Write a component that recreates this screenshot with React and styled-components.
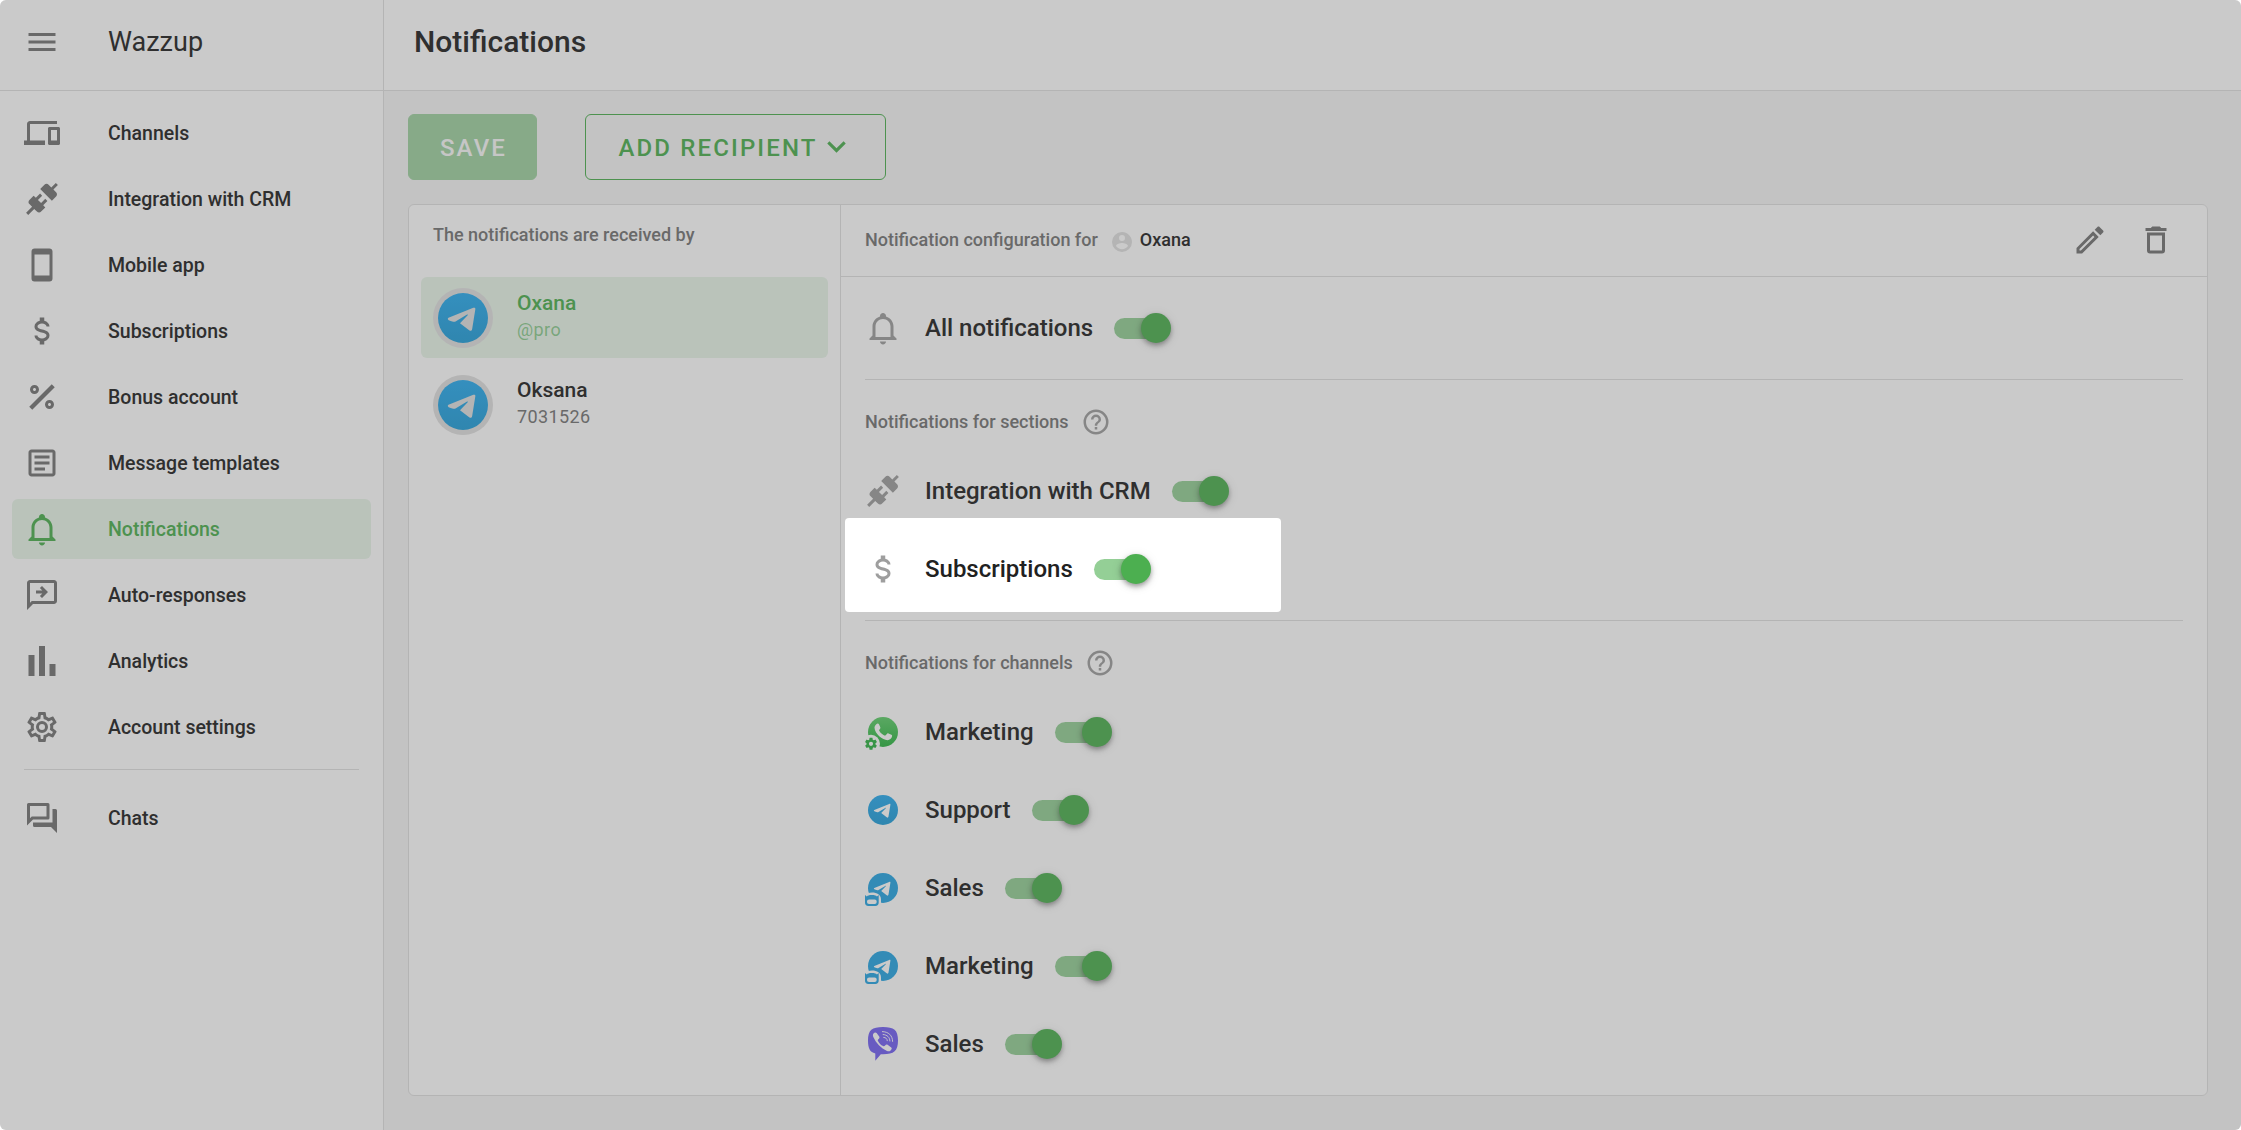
import React from "react";
import styled, { createGlobalStyle, css } from "styled-components";

const GlobalStyle = createGlobalStyle`
  * {
    box-sizing: border-box;
  }
  body {
    margin: 0;
    background: #fff;
    color: #212121;
    font-family: Roboto, "Noto Sans", sans-serif;
  }
  button {
    font-family: inherit;
  }
`;

const paths = {
  menu: "M3,6H21V8H3V6M3,11H21V13H3V11M3,16H21V18H3V16Z",
  devices:
    "M4 6h18V4H4c-1.1 0-2 .9-2 2v11H0v3h14v-3H4V6zm19 2h-6c-.55 0-1 .45-1 1v10c0 .55.45 1 1 1h6c.55 0 1-.45 1-1V9c0-.55-.45-1-1-1zm-1 9h-4v-7h4v7z",
  connection:
    "M21.4 7.5C22.2 8.3 22.2 9.6 21.4 10.3L18.6 13.1L10.8 5.3L13.6 2.5C14.4 1.7 15.7 1.7 16.4 2.5L18.2 4.3L21.2 1.3L22.6 2.7L19.6 5.7L21.4 7.5M15.6 13.3L14.2 11.9L11.4 14.7L9.3 12.6L12.1 9.8L10.7 8.4L7.9 11.2L6.4 9.8L3.6 12.6C2.8 13.4 2.8 14.7 3.6 15.4L5.4 17.2L1.4 21.2L2.8 22.6L6.8 18.6L8.6 20.4C9.4 21.2 10.7 21.2 11.4 20.4L14.2 17.6L12.8 16.2L15.6 13.3Z",
  phone:
    "M17,19H7V5H17M17,1H7C5.89,1 5,1.89 5,3V21A2,2 0 0,0 7,23H17A2,2 0 0,0 19,21V3C19,1.89 18.1,1 17,1Z",
  dollar:
    "M7,15H9C9,16.08 10.37,17 12,17C13.63,17 15,16.08 15,15C15,13.9 13.96,13.5 11.76,12.97C9.64,12.44 7,11.78 7,9C7,7.21 8.47,5.69 10.5,5.18V3H13.5V5.18C15.53,5.69 17,7.21 17,9H15C15,7.92 13.63,7 12,7C10.37,7 9,7.92 9,9C9,10.1 10.04,10.5 12.24,11.03C14.36,11.56 17,12.22 17,15C17,16.79 15.53,18.31 13.5,18.82V21H10.5V18.82C8.47,18.31 7,16.79 7,15Z",
  percent:
    "M18.5 3.5L20.5 5.5L5.5 20.5L3.5 18.5L18.5 3.5M7 4C8.66 4 10 5.34 10 7C10 8.66 8.66 10 7 10C5.34 10 4 8.66 4 7C4 5.34 5.34 4 7 4M17 14C18.66 14 20 15.34 20 17C20 18.66 18.66 20 17 20C15.34 20 14 18.66 14 17C14 15.34 15.34 14 17 14M7 6C6.45 6 6 6.45 6 7C6 7.55 6.45 8 7 8C7.55 8 8 7.55 8 7C8 6.45 7.55 6 7 6M17 16C16.45 16 16 16.45 16 17C16 17.55 16.45 18 17 18C17.55 18 18 17.55 18 17C18 16.45 17.55 16 17 16Z",
  article:
    "M19 5v14H5V5h14m0-2H5c-1.1 0-2 .9-2 2v14c0 1.1.9 2 2 2h14c1.1 0 2-.9 2-2V5c0-1.1-.9-2-2-2zM14 17H7v-2h7v2zm3-4H7v-2h10v2zm0-4H7V7h10v2z",
  bell:
    "M10 21H14C14 22.1 13.1 23 12 23S10 22.1 10 21M21 19V20H3V19L5 17V11C5 7.9 7 5.2 10 4.3V4C10 2.9 10.9 2 12 2S14 2.9 14 4V4.3C17 5.2 19 7.9 19 11V17L21 19M17 11C17 8.2 14.8 6 12 6S7 8.2 7 11V18H17V11Z",
  reply:
    "M20 2H4C2.9 2 2 2.9 2 4V22L6 18H20C21.1 18 22 17.1 22 16V4C22 2.9 21.1 2 20 2M20 16H5.2L4 17.2V4H20V16M12 6L16 10L12 14L10.6 12.6L12.2 11H8V9H12.2L10.6 7.4L12 6Z",
  bars: "M3,22V8H7V22H3M10,22V2H14V22H10M17,22V14H21V22H17Z",
  cog:
    "M12,8A4,4 0 0,1 16,12A4,4 0 0,1 12,16A4,4 0 0,1 8,12A4,4 0 0,1 12,8M12,10A2,2 0 0,0 10,12A2,2 0 0,0 12,14A2,2 0 0,0 14,12A2,2 0 0,0 12,10M10,22C9.75,22 9.54,21.82 9.5,21.58L9.13,18.93C8.5,18.68 7.96,18.34 7.44,17.94L4.95,18.95C4.73,19.03 4.46,18.95 4.34,18.73L2.34,15.27C2.21,15.05 2.27,14.78 2.46,14.63L4.57,12.97L4.5,12L4.57,11L2.46,9.37C2.27,9.22 2.21,8.95 2.34,8.73L4.34,5.27C4.46,5.05 4.73,4.96 4.95,5.05L7.44,6.05C7.96,5.66 8.5,5.32 9.13,5.07L9.5,2.42C9.54,2.18 9.75,2 10,2H14C14.25,2 14.46,2.18 14.5,2.42L14.87,5.07C15.5,5.32 16.04,5.66 16.56,6.05L19.05,5.05C19.27,4.96 19.54,5.05 19.66,5.27L21.66,8.73C21.79,8.95 21.73,9.22 21.54,9.37L19.43,11L19.5,12L19.43,13L21.54,14.63C21.73,14.78 21.79,15.05 21.66,15.27L19.66,18.73C19.54,18.95 19.27,19.04 19.05,18.95L16.56,17.95C16.04,18.34 15.5,18.68 14.87,18.93L14.5,21.58C14.46,21.82 14.25,22 14,22H10M11.25,4L10.88,6.61C9.68,6.86 8.62,7.5 7.85,8.39L5.44,7.35L4.69,8.65L6.8,10.2C6.4,11.37 6.4,12.64 6.8,13.8L4.68,15.36L5.43,16.66L7.86,15.62C8.63,16.5 9.68,17.14 10.87,17.38L11.24,20H12.76L13.13,17.39C14.32,17.14 15.37,16.5 16.14,15.62L18.57,16.66L19.32,15.36L17.2,13.81C17.6,12.64 17.6,11.37 17.2,10.2L19.31,8.65L18.56,7.35L16.15,8.39C15.38,7.5 14.32,6.86 13.12,6.62L12.75,4H11.25Z",
  chats:
    "M15,4V11H5.17L4,12.17V4H15M16,2H3A1,1 0 0,0 2,3V17L6,13H16A1,1 0 0,0 17,12V3A1,1 0 0,0 16,2M21,6H19V15H6V17A1,1 0 0,0 7,18H18L22,22V7A1,1 0 0,0 21,6Z",
  chevron: "M7.41,8.58L12,13.17L16.59,8.58L18,10L12,16L6,10L7.41,8.58Z",
  account:
    "M12,19.2C9.5,19.2 7.29,17.92 6,16C6.03,14 10,12.9 12,12.9C14,12.9 17.97,14 18,16C16.71,17.92 14.5,19.2 12,19.2M12,5A3,3 0 0,1 15,8A3,3 0 0,1 12,11A3,3 0 0,1 9,8A3,3 0 0,1 12,5M12,2A10,10 0 0,0 2,12A10,10 0 0,0 12,22A10,10 0 0,0 22,12C22,6.47 17.5,2 12,2Z",
  pencil:
    "M14.06,9L15,9.94L5.92,19H5V18.08L14.06,9M17.66,3C17.41,3 17.15,3.1 16.96,3.29L15.13,5.12L18.88,8.87L20.71,7.04C21.1,6.65 21.1,6 20.71,5.63L18.37,3.29C18.17,3.09 17.92,3 17.66,3M14.06,6.19L3,17.25V21H6.75L17.81,9.94L14.06,6.19Z",
  trash:
    "M6,19A2,2 0 0,0 8,21H16A2,2 0 0,0 18,19V7H6V19M8,9H16V19H8V9M15.5,4L14.5,3H9.5L8.5,4H5V6H19V4H15.5Z",
  help:
    "M11,18H13V16H11V18M12,2A10,10 0 0,0 2,12A10,10 0 0,0 12,22A10,10 0 0,0 22,12A10,10 0 0,0 12,2M12,20C7.59,20 4,16.41 4,12C4,7.59 7.59,4 12,4C16.41,4 20,7.59 20,12C20,16.41 16.41,20 12,20M12,6A4,4 0 0,0 8,10H10A2,2 0 0,1 12,8A2,2 0 0,1 14,10C14,12 11,11.75 11,15H13C13,12.75 16,12.5 16,10A4,4 0 0,0 12,6Z",
  gear:
    "M12,15.5A3.5,3.5 0 0,1 8.5,12A3.5,3.5 0 0,1 12,8.5A3.5,3.5 0 0,1 15.5,12A3.5,3.5 0 0,1 12,15.5M19.43,12.97C19.47,12.65 19.5,12.33 19.5,12C19.5,11.67 19.47,11.34 19.43,11L21.54,9.37C21.73,9.22 21.78,8.95 21.66,8.73L19.66,5.27C19.54,5.05 19.27,4.96 19.05,5.05L16.56,6.05C16.04,5.66 15.5,5.32 14.87,5.07L14.5,2.42C14.46,2.18 14.25,2 14,2H10C9.75,2 9.54,2.18 9.5,2.42L9.13,5.07C8.5,5.32 7.96,5.66 7.44,6.05L4.95,5.05C4.73,4.96 4.46,5.05 4.34,5.27L2.34,8.73C2.21,8.95 2.27,9.22 2.46,9.37L4.57,11C4.53,11.34 4.5,11.67 4.5,12C4.5,12.33 4.53,12.65 4.57,12.97L2.46,14.63C2.27,14.78 2.21,15.05 2.34,15.27L4.34,18.73C4.46,18.95 4.73,19.03 4.95,18.95L7.44,17.94C7.96,18.34 8.5,18.68 9.13,18.93L9.5,21.58C9.54,21.82 9.75,22 10,22H14C14.25,22 14.46,21.82 14.5,21.58L14.87,18.93C15.5,18.67 16.04,18.34 16.56,17.94L19.05,18.95C19.27,19.03 19.54,18.95 19.66,18.73L21.66,15.27C21.78,15.05 21.73,14.78 21.54,14.63L19.43,12.97Z",
  plane:
    "M6.3 14.9L21.2 8.9C22 8.6 22.6 8.9 22.4 9.8L20.5 21.6C20.3 22.8 19.6 22.9 18.7 22.3L13.2 18.1L17.8 13.3C18.1 12.9 17.7 12.7 17.2 13L10.5 17.1C9.8 17.5 9.1 17.3 6.4 16.3C5.8 16 5.7 15.2 6.3 14.9Z"
};

const Shell = styled.div`
  display: flex;
  height: 100vh;
  overflow: hidden;
  border-radius: 6px;
  background: #f5f5f5;
`;

const Sidebar = styled.aside`
  width: 384px;
  flex: none;
  background: #fff;
  border-right: 1px solid #e0e0e0;
`;

const Brand = styled.div`
  height: 91px;
  display: flex;
  align-items: center;
  gap: 48px;
  padding: 0 24px 7px;
  border-bottom: 1px solid #e0e0e0;
  font-size: 27px;
  svg {
    color: #757575;
  }
`;

const Nav = styled.nav`
  display: flex;
  flex-direction: column;
  gap: 6px;
  padding: 12px 12px 0;
`;

const NavItem = styled.a`
  height: 60px;
  display: flex;
  align-items: center;
  gap: 48px;
  padding: 0 12px;
  border-radius: 6px;
  font-size: 19.5px;
  font-weight: 500;
  svg {
    color: #757575;
  }
  ${({ $active }) =>
    $active &&
    css`
      background: #e8f5e9;
      color: #4caf50;
      svg {
        color: #4caf50;
      }
    `}
`;

const NavDivider = styled.hr`
  width: 335px;
  height: 1px;
  margin: 6px 12px 12px;
  border: 0;
  background: #e0e0e0;
`;

const Main = styled.main`
  flex: 1;
  display: flex;
  flex-direction: column;
`;

const PageHeader = styled.header`
  height: 91px;
  display: flex;
  align-items: center;
  padding: 0 30px 7px;
  background: #fff;
  border-bottom: 1px solid #e0e0e0;
  h1 {
    margin: 0;
    font-size: 30px;
    font-weight: 500;
  }
`;

const Toolbar = styled.div`
  display: flex;
  gap: 48px;
  padding: 23px 24px 24px;
`;

const Button = styled.button`
  height: 66px;
  width: ${({ $width }) => $width}px;
  display: flex;
  align-items: center;
  justify-content: center;
  padding: 2px 0 0 2px;
  border: 1px solid #4caf50;
  border-radius: 6px;
  background: ${({ $filled }) => ($filled ? "#4caf50" : "transparent")};
  color: ${({ $filled }) => ($filled ? "#fff" : "#4caf50")};
  opacity: ${({ disabled }) => (disabled ? 0.5 : 1)};
  font-size: 24px;
  font-weight: 500;
  letter-spacing: 2.14px;
  text-transform: uppercase;
  svg {
    margin-top: -3px;
  }
`;

const Card = styled.section`
  width: 1800px;
  height: 892px;
  display: flex;
  margin-left: 24px;
  background: #fff;
  border: 1px solid #e0e0e0;
  border-radius: 6px;
`;

const Recipients = styled.div`
  width: 432px;
  flex: none;
  display: flex;
  flex-direction: column;
  gap: 6px;
  padding: 0 12px;
  border-right: 1px solid #e0e0e0;
`;

const Caption = styled.div`
  font-size: 18px;
  font-weight: 500;
  color: #757575;
`;

const RecipientsCaption = styled(Caption)`
  height: 66px;
  padding: 19px 12px 0;
`;

const Recipient = styled.div`
  height: 81px;
  display: flex;
  align-items: center;
  gap: 24px;
  padding: 0 12px;
  border-radius: 6px;
  background: ${({ $active }) => ($active ? "#e8f5e9" : "transparent")};
  color: ${({ $active }) => ($active ? "#4caf50" : "#212121")};
  span {
    display: block;
    margin-top: -1px;
    color: ${({ $active }) => ($active ? "rgba(76, 175, 80, 0.6)" : "#757575")};
    font-size: 18px;
    line-height: 27px;
    letter-spacing: 0.4px;
  }
`;

const RecipientName = styled.div`
  margin-top: -3px;
  font-size: 21px;
  font-weight: 500;
  line-height: 27px;
`;

const Avatar = styled.div`
  width: 60px;
  height: 60px;
  padding: 5px;
  border-radius: 50%;
  background: #e0e0e0;
  svg {
    display: block;
  }
`;

const Config = styled.div`
  flex: 1;
`;

const ConfigHeader = styled.div`
  height: 72px;
  display: flex;
  align-items: center;
  padding: 0 33px 2px 24px;
  border-bottom: 1px solid #e0e0e0;
`;

const Person = styled.div`
  flex: 1;
  display: flex;
  align-items: center;
  gap: 6px;
  margin-left: 12px;
  font-size: 18px;
  font-weight: 500;
  svg {
    color: #e0e0e0;
    margin: 2px 0 -2px;
  }
`;

const Actions = styled.div`
  display: flex;
  gap: 30px;
  margin-top: 1px;
  color: #757575;
`;

const Group = styled.div`
  margin: 0 24px;
  padding: ${({ $titled }) => ($titled ? 0 : "12px")} 0 12px;
  & + & {
    border-top: 1px solid #e0e0e0;
  }
`;

const GroupTitle = styled(Caption)`
  height: 72px;
  display: flex;
  align-items: center;
  gap: 12px;
  padding-top: 11px;
  svg {
    color: #9e9e9e;
  }
`;

const Setting = styled.div`
  position: relative;
  height: 78px;
  display: flex;
  align-items: center;
  font-size: 24px;
  font-weight: 500;
  svg {
    flex: none;
    margin-right: 24px;
    color: #9e9e9e;
  }
`;

// Everything outside of the hint is dimmed by its spread shadow
const Spotlight = styled.div`
  position: absolute;
  z-index: 10;
  left: -20px;
  top: -12px;
  width: 436px;
  height: 94px;
  border-radius: 4px;
  box-shadow: 0 0 0 3000px rgba(78, 78, 78, 0.3);
  pointer-events: none;
`;

const Track = styled.div`
  width: 51px;
  height: 21px;
  display: flex;
  align-items: center;
  justify-content: flex-end;
  margin: 1px 0 0 21px;
  border-radius: 11px;
  background: rgba(76, 175, 80, 0.6);
`;

const Thumb = styled.div`
  width: 30px;
  height: 30px;
  flex: none;
  margin: -1px -6px 0 0;
  border-radius: 50%;
  background: #4caf50;
  box-shadow: 0 3px 6px -1px rgba(0, 0, 0, 0.3), 0 2px 4px rgba(0, 0, 0, 0.14),
    0 2px 12px rgba(0, 0, 0, 0.1);
`;

const Icon = ({ name, size = 36 }) => (
  <svg width={size} height={size} viewBox="0 0 24 24" fill="currentColor">
    <path d={paths[name]} />
  </svg>
);

const TelegramFill = ({ id }) => (
  <linearGradient id={id} x1="0" y1="0" x2="0" y2="1">
    <stop offset="0" stopColor="#2aabee" />
    <stop offset="1" stopColor="#229ed9" />
  </linearGradient>
);

const TelegramAvatar = ({ id }) => (
  <svg width="50" height="50" viewBox="0 0 30 30">
    <TelegramFill id={id} />
    <circle cx="15" cy="15" r="15" fill={`url(#${id})`} />
    <path d={paths.plane} fill="#e0e0e0" />
  </svg>
);

const Telegram = () => (
  <svg width="36" height="36" viewBox="0 0 36 36">
    <TelegramFill id="tg" />
    <circle cx="18" cy="18" r="15" fill="url(#tg)" />
    <path d={paths.plane} fill="#fff" transform="translate(3 3)" />
  </svg>
);

const TelegramBot = () => (
  <svg width="36" height="36" viewBox="0 0 36 36">
    <circle cx="18" cy="18" r="15" fill="#27a5e3" />
    <path d={paths.plane} fill="#fff" transform="translate(3 3)" />
    <path d="M0 36V25.5C1 23.5 4 22.6 7 22.6C12 22.6 16 25 16 29.5V36Z" fill="#fff" />
    <path
      d="M0 24.9L1.8 26.6C2.6 25.6 4 25.1 6.8 25.1S11.1 25.6 11.9 26.6L13.7 24.9V32.6A3.4 3.4 0 0 1 10.3 36H3.4A3.4 3.4 0 0 1 0 32.6Z"
      fill="#27a5e3"
    />
    <rect x="2" y="29.4" width="9.7" height="4.6" rx="2.1" fill="#fff" />
  </svg>
);

const WhatsApp = () => (
  <svg width="36" height="36" viewBox="0 0 36 36">
    <linearGradient id="wa" x1="0" y1="0" x2="0" y2="1">
      <stop offset="0" stopColor="#60cf6b" />
      <stop offset="1" stopColor="#2bb541" />
    </linearGradient>
    <circle cx="18" cy="18" r="15" fill="url(#wa)" />
    <path
      d="M11.3 10.3C12.2 9.3 13.6 9.4 14.1 10.5L15.3 13.3C15.6 14 15.3 14.6 14.7 15.3C14 16 14 16.3 14.4 17C15.6 19 17.2 20.5 19.3 21.4C20 21.7 20.4 21.6 20.9 21L22.1 19.7C22.5 19.2 22.9 19.1 23.5 19.4L26.4 20.8C27.2 21.2 27.2 21.7 27 22.6C26.5 24.7 24.7 26.2 22.5 26.2C17.5 26 9.8 20 9.5 13.8C9.5 12.3 10.4 11.2 11.3 10.3Z"
      fill="#fff"
    />
    <circle cx="6" cy="29.8" r="9" fill="#fff" />
    <path
      d={paths.gear}
      fill="#2fb344"
      transform="translate(-1.2 22.6) scale(0.6)"
    />
  </svg>
);

const Viber = () => (
  <svg width="36" height="36" viewBox="0 0 36 36">
    <path
      d="M18 1C29 1 33 4 33 14.5C33 25 29 28.2 18 28.2H15.8L10.3 34.8V27.4C5 26.2 3 22.5 3 14.5C3 4 7 1 18 1Z"
      fill="#7360f2"
    />
    <path
      d="M8.3 7.7C9.4 6.3 10.7 6 11.6 7L14.2 10.4C14.8 11.3 14.5 12.2 13.6 12.9C12.8 13.5 12.6 14 13 14.9C14.1 17.2 15.8 18.9 18.1 20C19 20.4 19.5 20.2 20.1 19.4C20.8 18.5 21.7 18.2 22.6 18.8L26.2 21.5C27.1 22.2 26.9 23.3 25.6 24.5C24.5 25.5 23.4 25.6 22 24.9C15.8 21.9 11.2 17.3 8.3 10.9C7.8 9.6 7.8 8.5 8.3 7.7Z"
      fill="#fff"
    />
    <g fill="none" stroke="#fff" strokeWidth="0.9" strokeLinecap="round">
      <path d="M17.4 5.6C23.5 5.7 27.6 9.5 27.6 15.4" />
      <path d="M18.1 8.5C22.3 8.8 24.8 11.3 24.9 15" />
      <path d="M18.7 11.4C21 11.6 22.2 12.7 22.3 14.7" />
    </g>
  </svg>
);

const navItems = [
  ["devices", "Channels"],
  ["connection", "Integration with CRM"],
  ["phone", "Mobile app"],
  ["dollar", "Subscriptions"],
  ["percent", "Bonus account"],
  ["article", "Message templates"],
  ["bell", "Notifications"],
  ["reply", "Auto-responses"],
  ["bars", "Analytics"],
  ["cog", "Account settings"]
];

const recipients = [
  { name: "Oxana", contact: "@pro" },
  { name: "Oksana", contact: "7031526" }
];

const channels = [
  { name: "Marketing", Logo: WhatsApp },
  { name: "Support", Logo: Telegram },
  { name: "Sales", Logo: TelegramBot },
  { name: "Marketing", Logo: TelegramBot },
  { name: "Sales", Logo: Viber }
];

const SettingRow = ({ icon, label, spotlight }) => (
  <Setting>
    {icon}
    {label}
    <Track>
      <Thumb />
    </Track>
    {spotlight && <Spotlight />}
  </Setting>
);

const App = () => {
  const current = recipients[0];
  return (
    <Shell>
      <GlobalStyle />
      <Sidebar>
        <Brand>
          <Icon name="menu" />
          Wazzup
        </Brand>
        <Nav>
          {navItems.map(([icon, label]) => (
            <NavItem key={label} $active={label === "Notifications"}>
              <Icon name={icon} />
              {label}
            </NavItem>
          ))}
          <NavDivider />
          <NavItem>
            <Icon name="chats" />
            Chats
          </NavItem>
        </Nav>
      </Sidebar>
      <Main>
        <PageHeader>
          <h1>Notifications</h1>
        </PageHeader>
        <Toolbar>
          <Button $filled $width={129} disabled>
            Save
          </Button>
          <Button $width={301}>
            Add recipient
            <Icon name="chevron" size={37} />
          </Button>
        </Toolbar>
        <Card>
          <Recipients>
            <RecipientsCaption>The notifications are received by</RecipientsCaption>
            {recipients.map(({ name, contact }) => (
              <Recipient key={name} $active={name === current.name}>
                <Avatar>
                  <TelegramAvatar id={`avatar-${name}`} />
                </Avatar>
                <div>
                  <RecipientName>{name}</RecipientName>
                  <span>{contact}</span>
                </div>
              </Recipient>
            ))}
          </Recipients>
          <Config>
            <ConfigHeader>
              <Caption>Notification configuration for</Caption>
              <Person>
                <Icon name="account" size={24} />
                {current.name}
              </Person>
              <Actions>
                <Icon name="pencil" />
                <Icon name="trash" />
              </Actions>
            </ConfigHeader>
            <Group>
              <SettingRow icon={<Icon name="bell" />} label="All notifications" />
            </Group>
            <Group $titled>
              <GroupTitle>
                Notifications for sections
                <Icon name="help" size={30} />
              </GroupTitle>
              <SettingRow
                icon={<Icon name="connection" />}
                label="Integration with CRM"
              />
              <SettingRow
                icon={<Icon name="dollar" />}
                label="Subscriptions"
                spotlight
              />
            </Group>
            <Group $titled>
              <GroupTitle>
                Notifications for channels
                <Icon name="help" size={30} />
              </GroupTitle>
              {channels.map(({ name, Logo }, index) => (
                <SettingRow key={index} icon={<Logo />} label={name} />
              ))}
            </Group>
          </Config>
        </Card>
      </Main>
    </Shell>
  );
};

export default App;
